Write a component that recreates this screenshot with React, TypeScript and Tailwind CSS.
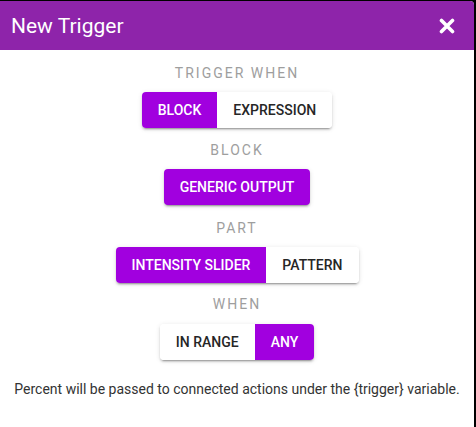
import React, { useState } from 'react';

const shadow =
  'shadow-[0_3px_1px_-2px_rgba(0,0,0,0.2),0_2px_2px_0_rgba(0,0,0,0.14),0_1px_5px_0_rgba(0,0,0,0.12)]';

function Label({ children }: { children: React.ReactNode }) {
  return <div className="text-[14px] leading-5 tracking-[2px] text-[#9e9e9e] uppercase">{children}</div>;
}

interface ToggleProps {
  options: string[];
  value: string;
  onChange: (v: string) => void;
}

function Toggle({ options, value, onChange }: ToggleProps) {
  return (
    <div className={`flex rounded overflow-hidden bg-white ${shadow}`}>
      {options.map((opt) => (
        <button
          key={opt}
          onClick={() => onChange(opt)}
          className={
            opt === value
              ? 'h-9 px-4 text-[14px] font-medium uppercase bg-[#a100df] text-white'
              : 'h-9 px-4 text-[14px] font-medium uppercase bg-white text-[#262626]'
          }
        >
          {opt}
        </button>
      ))}
    </div>
  );
}

export default function App() {
  const [when, setWhen] = useState('Block');
  const [part, setPart] = useState('Intensity Slider');
  const [range, setRange] = useState('Any');

  return (
    <div className="w-[476px] h-[427px] bg-black pt-px pr-[2px]" style={{ fontFamily: 'Roboto, sans-serif' }}>
      <div className="h-full bg-white rounded-tr flex flex-col">
        <div className="h-[49px] bg-[#8e24aa] rounded-tr flex items-center justify-between pl-[11px] pr-[19px] shrink-0">
          <h1 className="text-[21px] font-normal text-white leading-none mt-px">New Trigger</h1>
          <svg width="16" height="16" viewBox="0 0 16 16" className="mt-px">
            <path d="M2.5 2.5 L13.5 13.5 M13.5 2.5 L2.5 13.5" stroke="white" strokeWidth="3.6" strokeLinecap="round" />
          </svg>
        </div>

        <div className="flex flex-col items-center pt-[13px]">
          <Label>Trigger when</Label>
          <div className="mt-[9px] mb-[12px]">
            <Toggle options={['Block', 'Expression']} value={when} onChange={setWhen} />
          </div>

          <Label>Block</Label>
          <div className="mt-[9px] mb-[13px]">
            <button className={`h-9 px-4 rounded text-[14px] font-medium uppercase bg-[#a100df] text-white ${shadow}`}>
              Generic Output
            </button>
          </div>

          <Label>Part</Label>
          <div className="mt-[9px] mb-[11px]">
            <Toggle options={['Intensity Slider', 'Pattern']} value={part} onChange={setPart} />
          </div>

          <Label>When</Label>
          <div className="mt-[10px] mb-[19px]">
            <Toggle options={['In Range', 'Any']} value={range} onChange={setRange} />
          </div>

          <p className="text-[14px] leading-5 text-[#333]">
            Percent will be passed to connected actions under the {'{trigger}'} variable.
          </p>
        </div>
      </div>
    </div>
  );
}
